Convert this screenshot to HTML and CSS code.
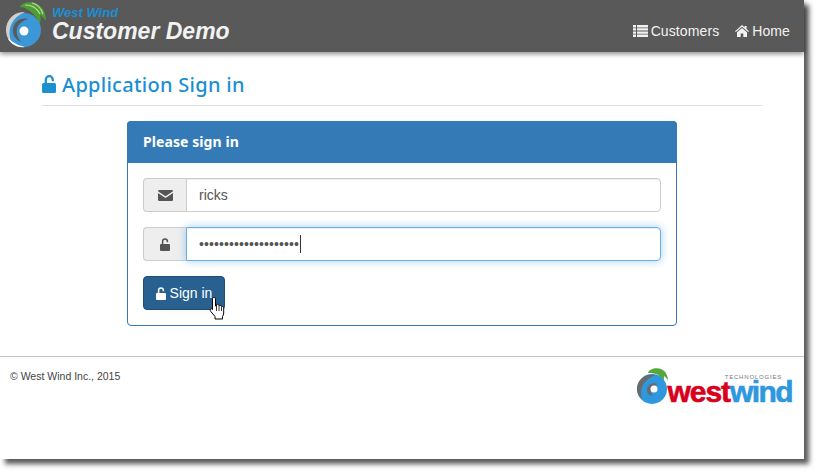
FILE: index.html
```html
<!DOCTYPE html>
<html lang="en">
<head>
<meta charset="utf-8">
<title>Application Sign in</title>
<link rel="stylesheet" href="styles.css">
</head>
<body>
<div class="window">
  <header class="topbar">
    <a class="brand">
      <svg class="brand-logo" viewBox="0 0 46 46" width="46" height="46" aria-hidden="true">
        <path d="M15 5C17 0 26-1 32 2c6 3 9 9 9 17-2-3-4-5-6-6 1 3 1 6-1 9-1-5-4-9-8-12-3-3-7-5-11-5z" fill="#4f9e34"/>
        <path d="M20 3c6 0 12 3 15 9M27 1c5 1 9 5 11 11" stroke="#bcd89a" stroke-width="1.200" fill="none"/>
        <circle cx="19" cy="28" r="17" fill="#3b97d6"/>
        <path d="M20 10C9 9 1 18 1 28c0 5 2 10 6 13C3 33 4 24 9 18c3-4 7-6 11-8z" fill="#d0d0d0"/>
        <path d="M23 17c-8-2-14 3-15 10-1 6 3 11 8 13-3-4-5-8-4-13 1-5 5-8 11-10z" fill="#5a5a5a"/>
        <circle cx="19" cy="29" r="4.500" fill="#fff"/>
        <path d="M3 37c4 6 10 9 17 8-5-1-9-3-12-5-2-1-3-3-5-3z" fill="#fff"/>
      </svg>
      <span class="brand-text">
        <span class="brand-small">West Wind</span>
        <span class="brand-big">Customer Demo</span>
      </span>
    </a>
    <nav class="nav">
      <a class="nav-link">
        <svg class="nav-icon" viewBox="0 0 15 12" width="15" height="12" aria-hidden="true"><path d="M0 0h3v2.400H0zM4 0h11v2.400H4zM0 3.200h3v2.400H0zM4 3.200h11v2.400H4zM0 6.400h3v2.400H0zM4 6.400h11v2.400H4zM0 9.600h3V12H0zM4 9.600h11V12H4z" fill="#f2f2f2"/></svg>Customers</a>
      <a class="nav-link">
        <svg class="nav-icon" viewBox="0 0 14 12" width="14" height="12" aria-hidden="true"><path d="M7 0l2.600 2.300V1h2v3.100L14 6.200l-.8.9L7 1.700.8 7.100 0 6.200zM2 7.200l5-4.300 5 4.300V12H8.300V8.600H5.700V12H2z" fill="#f2f2f2"/></svg>Home</a>
    </nav>
  </header>

  <main class="content">
    <h1 class="page-title">
      <svg class="title-icon" viewBox="0 0 14 18" width="14" height="18" aria-hidden="true"><path d="M1.500 8h11A1.500 1.500 0 0 1 14 9.500v7a1.500 1.500 0 0 1-1.500 1.500h-11A1.500 1.500 0 0 1 0 16.500v-7A1.500 1.500 0 0 1 1.500 8z" fill="#1c8fd1"/><path d="M3.800 9V4.700a3.500 3.500 0 0 1 7 0v1.500" fill="none" stroke="#1c8fd1" stroke-width="2.300"/></svg>
      Application Sign in
    </h1>

    <section class="panel">
      <div class="panel-heading">Please sign in</div>
      <form class="panel-body">
        <div class="input-group">
          <span class="addon">
            <svg viewBox="0 0 15 11" width="15" height="11" aria-hidden="true"><path d="M0 1.200A1.200 1.200 0 0 1 1.200 0h12.600A1.200 1.200 0 0 1 15 1.200L7.500 6.200 0 1.200zM0 3l7.500 5L15 3v6.800a1.200 1.200 0 0 1-1.200 1.200H1.200A1.200 1.200 0 0 1 0 9.800z" fill="#555"/></svg>
          </span>
          <div class="field">ricks</div>
        </div>
        <div class="input-group">
          <span class="addon">
            <svg viewBox="0 0 10 13" width="10" height="13" aria-hidden="true"><path d="M1 6h8a1 1 0 0 1 1 1v5a1 1 0 0 1-1 1H1a1 1 0 0 1-1-1V7a1 1 0 0 1 1-1z" fill="#555"/><path d="M2.600 6.500V3.300a2.400 2.400 0 0 1 4.800 0v1" fill="none" stroke="#555" stroke-width="1.500"/></svg>
          </span>
          <div class="field field-focus"><span class="dots">••••••••••••••••••••</span><span class="caret"></span></div>
        </div>
        <div class="actions">
          <button type="button" class="btn">
            <svg viewBox="0 0 10 13" width="10" height="13" aria-hidden="true"><path d="M1 6h8a1 1 0 0 1 1 1v5a1 1 0 0 1-1 1H1a1 1 0 0 1-1-1V7a1 1 0 0 1 1-1z" fill="#fff"/><path d="M2.600 6.500V3.300a2.400 2.400 0 0 1 4.800 0v1" fill="none" stroke="#fff" stroke-width="1.500"/></svg>
            Sign in
          </button>
          <svg class="cursor" viewBox="0 0 16 24" width="16" height="24" aria-hidden="true"><path d="M5 1.500c1 0 1.500.7 1.500 1.500v7l1-.2V8.500c1.500-.6 2.300 0 2.300 1l.8.100c1.300-.5 2 0 2.100.9.900-.3 2 .2 2 1.200V17c0 1.500-.6 2.500-1.200 3.500V23H6v-2.500L1.800 15.500c-.8-1-.8-2 0-2.500.8-.4 1.500 0 2 .6l-.3-.2V3c0-.8.500-1.500 1.500-1.500z" fill="#fff" stroke="#000" stroke-width="1"/><path d="M7.500 10v5M10 10v5M12.500 11v4" stroke="#000" stroke-width=".8"/></svg>
        </div>
      </form>
    </section>
  </main>

  <footer class="footer">
    <small class="copyright">© West Wind Inc., 2015</small>
    <div class="footer-logo">
      <svg class="footer-mark" viewBox="0 0 34 36" width="34" height="36" aria-hidden="true">
        <path d="M12 5c1-4 8-6 13-4 5 2 7 7 7 12-1-3-3-4-4-5 0 2 0 4-1 6-1-4-4-7-7-8-3-1-5-1-8-1z" fill="#57a83c"/>
        <circle cx="16" cy="21" r="15" fill="#2f97dd"/>
        <path d="M19 7C9 5 1 12 1 21c0 4 2 8 5 10-2-6-1-12 3-17 3-3 6-5 10-7z" fill="#6a6a6a"/>
        <path d="M22 16c-5-2-11 1-11 6 0 3 2 6 6 6-2-2-3-4-2-6 1-3 3-5 7-6z" fill="#6a6a6a"/>
        <circle cx="18" cy="21" r="3.500" fill="#fff"/>
      </svg>
      <div class="wordmark">
        <span class="tagline">TECHNOLOGIES</span>
        <span class="words"><span class="west">west</span><span class="wind">wind</span></span>
      </div>
    </div>
  </footer>
</div>
</body>
</html>
```

FILE: styles.css
```css
* { box-sizing: border-box; }

html, body {
  margin: 0;
  height: 100%;
  background: #fff;
  overflow: hidden;
}

body {
  font-family: "Liberation Sans", Arial, sans-serif;
  color: #333;
}

.window {
  width: 804px;
  height: 459px;
  background: #fff;
  box-shadow: 5px 5px 5px rgba(0, 0, 0, 0.65);
  display: flex;
  flex-direction: column;
}

.topbar {
  height: 52px;
  flex: none;
  background: #595959;
  box-shadow: 0 2px 5px rgba(0, 0, 0, 0.45);
  display: flex;
  justify-content: space-between;
  padding: 2px 14px 0 5px;
}

.brand {
  display: flex;
  align-items: flex-start;
}

.brand-logo {
  flex: none;
  margin-right: 1px;
}

.brand-text {
  display: flex;
  flex-direction: column;
  padding-top: 5px;
  font-style: italic;
}

.brand-small {
  font-size: 13px;
  line-height: 12px;
  font-weight: 700;
  color: #1c8fd1;
}

.brand-big {
  font-size: 23px;
  line-height: 25px;
  font-weight: 700;
  color: #f2f2f2;
}

.nav {
  display: flex;
  gap: 16px;
  padding-top: 20px;
  font-size: 14px;
  line-height: 18px;
  color: #f2f2f2;
}

.nav-link {
  display: flex;
  align-items: center;
  height: 18px;
  letter-spacing: 0.1px;
}

.nav-icon {
  margin-right: 3px;
}

.content {
  flex: none;
  height: 304px;
  padding: 0 42px;
}

.page-title {
  margin: 0;
  height: 54px;
  padding-top: 20px;
  border-bottom: 1px solid #e0e0e0;
  font-family: "Noto Sans", sans-serif;
  font-size: 20px;
  line-height: 26px;
  font-weight: 500;
  letter-spacing: 0.28px;
  color: #1c8fd1;
  display: flex;
  align-items: flex-start;
  gap: 6px;
}

.title-icon {
  margin-top: 3px;
}

.panel {
  width: 550px;
  height: 205px;
  margin: 15px 0 0 85px;
  border: 1px solid #337ab7;
  border-radius: 4px;
}

.panel-heading {
  height: 42px;
  margin: -1px -1px 0;
  padding: 0 16px;
  background: #337ab7;
  border-radius: 4px 4px 0 0;
  color: #fff;
  font-family: "Noto Sans", sans-serif;
  font-size: 14px;
  font-weight: 700;
  line-height: 42px;
  letter-spacing: 0.08px;
}

.panel-body {
  padding: 15px;
  display: flex;
  flex-direction: column;
  gap: 15px;
}

.input-group {
  display: flex;
  height: 34px;
}

.addon {
  width: 43px;
  flex: none;
  display: flex;
  align-items: center;
  justify-content: center;
  background: #eee;
  border: 1px solid #ccc;
  border-right: 0;
  border-radius: 4px 0 0 4px;
}

.field {
  flex: 1;
  display: flex;
  align-items: center;
  padding: 0 12px;
  background: #fff;
  border: 1px solid #ccc;
  border-radius: 0 4px 4px 0;
  box-shadow: inset 0 1px 1px rgba(0, 0, 0, 0.075);
  font-size: 14px;
  color: #555;
}

.field-focus {
  position: relative;
  border-color: #66afe9;
  box-shadow: inset 0 1px 1px rgba(0, 0, 0, 0.075), 0 0 8px rgba(102, 175, 233, 0.6);
}

.dots {
  font-family: "Liberation Sans", Arial, sans-serif;
  font-size: 14px;
  line-height: 14px;
  letter-spacing: 0.1px;
  color: #555;
}

.caret {
  width: 1px;
  height: 18px;
  margin-left: 1px;
  background: #333;
}

.actions {
  position: relative;
  height: 34px;
}

.btn {
  width: 82px;
  height: 34px;
  padding: 0;
  display: flex;
  align-items: center;
  justify-content: center;
  gap: 4px;
  background: #286090;
  border: 1px solid #204d74;
  border-radius: 4px;
  color: #fff;
  font-family: "Liberation Sans", Arial, sans-serif;
  font-size: 14px;
}

.cursor {
  position: absolute;
  left: 66px;
  top: 20px;
}

.footer {
  flex: 1;
  border-top: 1px solid #c4c4c4;
  display: flex;
  justify-content: space-between;
  padding: 13px 12px 0 10px;
}

.copyright {
  font-size: 10.500px;
  line-height: 12px;
  color: #444;
}

.footer-logo {
  display: flex;
  align-items: flex-start;
  margin-top: -2px;
}

.footer-mark {
  flex: none;
  margin-right: -3px;
}

.wordmark {
  display: flex;
  flex-direction: column;
  padding-top: 6px;
}

.tagline {
  align-self: flex-end;
  font-size: 6px;
  line-height: 6px;
  letter-spacing: 0.8px;
  color: #777;
  margin-right: 10px;
}

.words {
  font-size: 30px;
  line-height: 23px;
  font-weight: 700;
  -webkit-text-stroke: 0.6px currentColor;
}

.west { color: #d9001b; letter-spacing: -1px; }
.wind { color: #2f97dd; letter-spacing: -1.600px; }
```
